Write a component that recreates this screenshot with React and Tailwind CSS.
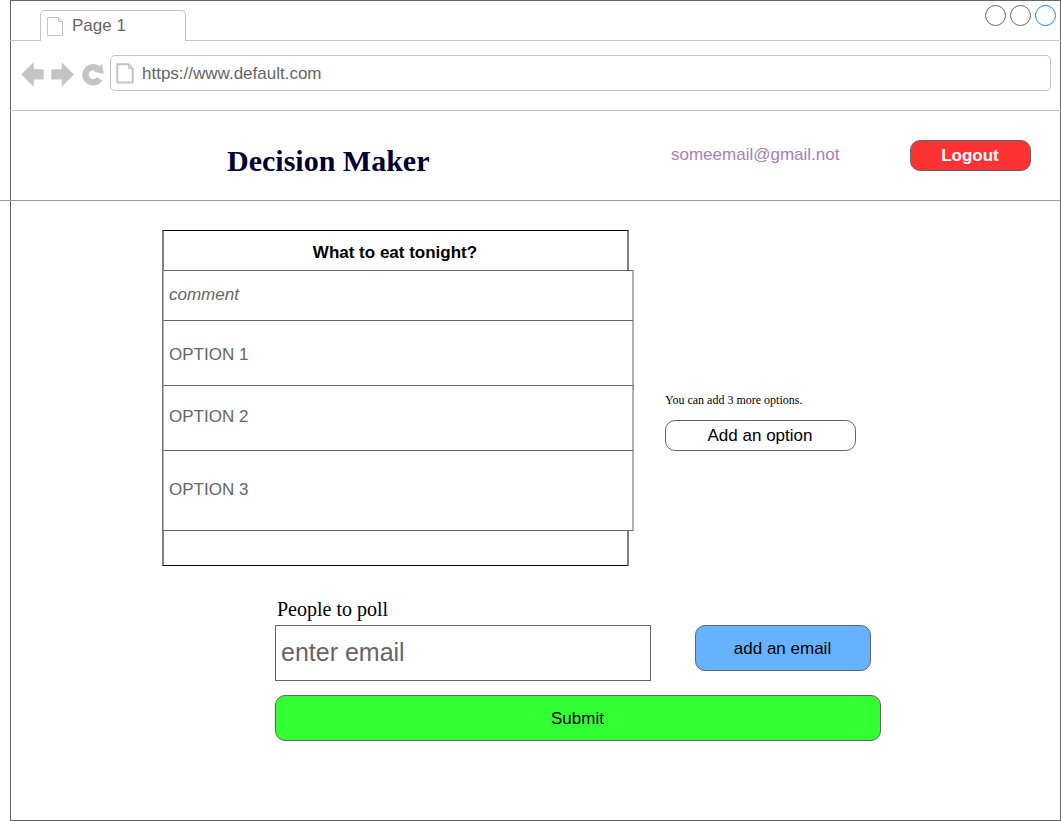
import React from "react";

const sans = "font-['Liberation_Sans',Arial,sans-serif]";
const serif = "font-['Liberation_Serif','Times_New_Roman',serif]";

function TabStrip() {
  return (
    <div className="-mx-px flex h-10 items-end">
      <div className="w-[30px] border-b border-[#c4c4c4]" />
      <div className="flex h-[31px] w-[146px] rounded-t-[5px] border border-b-0 border-[#c4c4c4]">
        <svg className="ml-[6px] mt-[6px] h-[19px] w-[16px]" viewBox="0 0 16 19" fill="none" stroke="#c4c4c4">
          <path d="M0.5 0.5H11.5L15.5 5V18.5H0.5Z" />
          <path d="M11.5 0.5V4.5H15.5" />
        </svg>
        <span className="ml-[9px] mt-[5px] text-[17px] leading-[19px]">Page 1</span>
      </div>
      <div className="flex h-10 flex-1 items-start justify-end gap-1 border-b border-[#c4c4c4] pr-[5px] pt-[4px]">
        <div className="size-[21px] rounded-full border border-[#666666]" />
        <div className="size-[21px] rounded-full border border-[#666666]" />
        <div className="size-[21px] rounded-full border border-[#008cff]" />
      </div>
    </div>
  );
}

function AddressBar() {
  return (
    <div className="-mx-px flex h-[70px] items-start border-b border-[#c4c4c4] pr-[10px]">
      <svg className="mt-[14px] h-[36px] w-[100px] shrink-0" viewBox="10 55 100 36" fill="#c4c4c4">
        <path d="M21.2 74.5L33.7 62.3V69.2H43.7V79.5H33.7V86.8Z" />
        <path d="M73.9 74.5L61.7 62.3V69.2H51.3V79.5H61.7V86.8Z" />
        <path d="M99.5 78.8A7.6 7.6 0 1 1 97.5 68.6" fill="none" stroke="#c4c4c4" strokeWidth="6.4" />
        <path d="M102 64L103.8 74L93.6 71.6Z" />
      </svg>
      <div className="mt-[14px] flex h-9 flex-1 items-start rounded-[5px] border border-[#c4c4c4]">
        <svg className="ml-[5px] mt-[7px] h-[21px] w-[18px]" viewBox="0 0 18 21" fill="none" stroke="#c4c4c4">
          <path d="M1.3 1.3H12.5L16.7 6V19.5H1.3Z" strokeWidth="2" />
          <path d="M12.5 1.3V5.5H16.7" />
        </svg>
        <span className="ml-2 mt-2 text-[17px] leading-[19px]">https://www.default.com</span>
      </div>
    </div>
  );
}

function Header() {
  return (
    <header className="-ml-[11px] -mr-px flex h-[90px] items-start border-b border-[#999999] pl-[227px] pr-[30px]">
      <h1 className={`${serif} mt-[33px] w-[444px] text-[30px] font-bold leading-[34px] text-[#000033]`}>Decision Maker</h1>
      <span className="mt-[34px] flex-1 text-[17px] leading-[19px] text-[#a680b8]">someemail@gmail.not</span>
      <button className="mt-[29px] h-[31px] w-[121px] rounded-[10px] border border-[#666666] bg-[#ff3333] pr-px text-[17px] font-bold leading-[19px] text-white">Logout</button>
    </header>
  );
}

const rows = [
  { text: "comment", style: "h-[50px] pt-[14px] italic" },
  { text: "OPTION 1", style: "h-[65px] pt-[24px]" },
  { text: "OPTION 2", style: "h-[65px] pt-[21px]", overlap: true },
  { text: "OPTION 3", style: "h-[80px] pt-[29px]" },
];

function Poll() {
  return (
    <section className="h-[336px] w-[467px] border-x-2 border-y border-x-[#808080] border-y-black">
      <h2 className="h-[39px] pr-px pt-3 text-center text-[17px] font-bold leading-[19px] text-black">What to eat tonight?</h2>
      <div className="-ml-[2px] w-[472px] border-b border-l border-r-2 border-b-[#666666] border-l-[#737373] border-r-[#b2b2b2] bg-white">
        {rows.map((row) => (
          <div key={row.text} className={`${row.style} relative -mr-px border-l border-t border-l-[#b2b2b2] border-t-[#666666] pl-[5px] text-[17px] leading-[19px]`}>
            {row.text}
            {row.overlap && <i className="absolute -right-px -top-px h-[5px] w-px bg-[#8c8c8c]" />}
          </div>
        ))}
      </div>
    </section>
  );
}

export default function App() {
  return (
    <div className={`${sans} h-[821px] w-[1061px] overflow-hidden bg-white pl-[10px] text-[#666666]`}>
      <div className="h-[821px] w-[1051px] border border-[#666666]">
        <TabStrip />
        <AddressBar />
        <Header />
        <main>
          <div className="flex pl-[151px] pt-[29px]">
            <Poll />
            <div className="ml-[36px] pt-[163px] text-black">
              <p className={`${serif} text-[12px] leading-[14px]`}>You can add 3 more options.</p>
              <button className="mt-[13px] h-[31px] w-[191px] rounded-[10px] border border-[#666666] pr-px text-[17px] leading-[19px]">Add an option</button>
            </div>
          </div>
          <form className="ml-[264px] mt-8 w-[606px] text-black">
            <label className={`${serif} block h-[27px] pl-[2px] text-[20px] leading-[23px]`}>People to poll</label>
            <div className="flex items-start">
              <div className="h-[56px] w-[376px] border border-[#666666] pl-[5px] pt-[12px] text-[25px] leading-[28px] text-[#666666]">enter email</div>
              <button type="button" className="ml-[44px] h-[46px] w-[176px] rounded-[10px] border border-[#666666] bg-[#66b2ff] pr-px text-[17px] leading-[19px]">add an email</button>
            </div>
            <button type="button" className="mt-[14px] h-[46px] w-[606px] rounded-[10px] border border-[#666666] bg-[#33ff33] pr-px text-[17px] leading-[19px]">Submit</button>
          </form>
        </main>
      </div>
    </div>
  );
}
